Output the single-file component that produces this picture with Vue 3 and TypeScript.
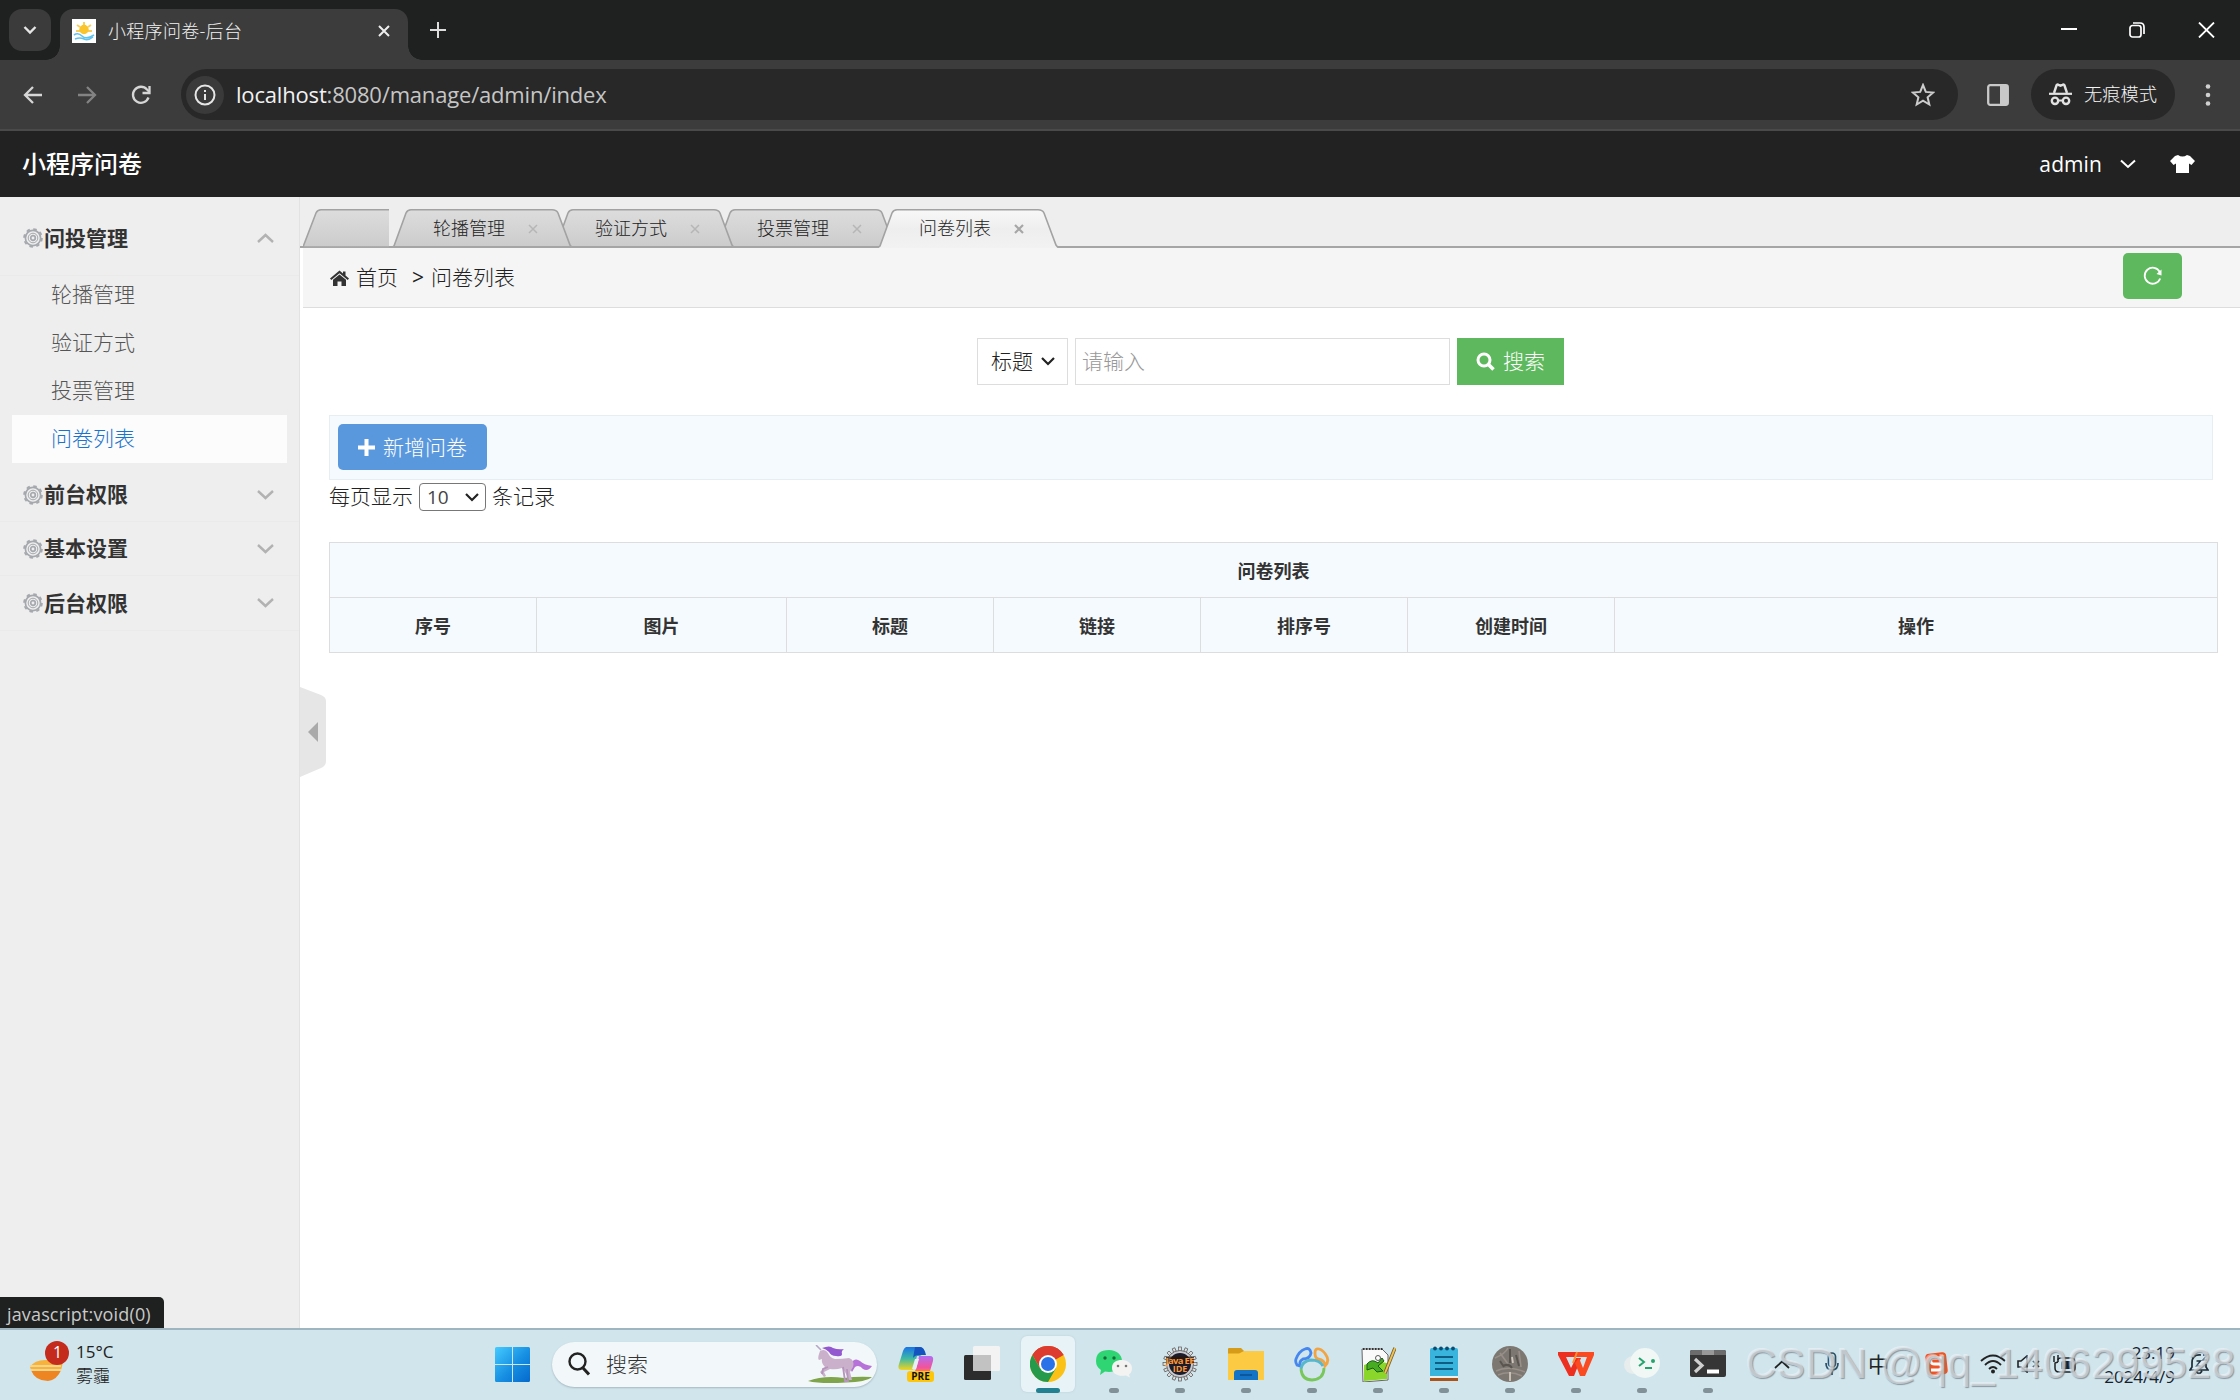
<script setup lang="ts">
interface Group { title: string; open: boolean; height: number; items: string[] }

const groups: Group[] = [
  { title: '问投管理', open: true, height: 75, items: ['轮播管理', '验证方式', '投票管理', '问卷列表'] },
  { title: '前台权限', open: false, height: 54, items: [] },
  { title: '基本设置', open: false, height: 54, items: [] },
  { title: '后台权限', open: false, height: 55, items: [] },
]
const activeItem = '问卷列表'
const tabs: string[] = ['轮播管理', '验证方式', '投票管理', '问卷列表']
const columns: { name: string; width: number }[] = [
  { name: '序号', width: 207 },
  { name: '图片', width: 250 },
  { name: '标题', width: 207 },
  { name: '链接', width: 207 },
  { name: '排序号', width: 207 },
  { name: '创建时间', width: 207 },
  { name: '操作', width: 603 },
]
const gearTeeth: number[] = Array.from({ length: 16 }, (_, i) => i * 22.5)
</script>

<template>
  <div class="screen">
    <div class="tabstrip">
      <div class="tab-search">
        <svg width="14" height="10" viewBox="0 0 14 10"><path d="M1.5 2 7 7.5 12.5 2" fill="none" stroke="#e6e6e6" stroke-width="2.4" /></svg>
      </div>
      <div class="browser-tab">
        <svg class="favicon" width="24" height="24" viewBox="0 0 24 24">
          <rect width="24" height="24" fill="#fff" />
          <path d="M12 3v3M5 6l3 2M19 6l-3 2M4 12h4M16 12h4" stroke="#f9cf5c" stroke-width="2" />
          <circle cx="12" cy="10.500" r="4.700" fill="#f9c42c" />
          <path d="M2 16q4-3 8 1t12-1M3 20q5-2 9 0t9-2" fill="none" stroke="#5fc3ee" stroke-width="1.600" />
        </svg>
        <span class="browser-title">小程序问卷-后台</span>
        <svg width="12" height="12" viewBox="0 0 12 12"><path d="M1 1 11 11M11 1 1 11" stroke="#eee" stroke-width="2" /></svg>
      </div>
      <svg class="new-tab" width="16" height="16" viewBox="0 0 16 16"><path d="M8 0v16M0 8h16" stroke="#ddd" stroke-width="2" /></svg>
      <svg class="win min" width="16" height="16" viewBox="0 0 16 16"><path d="M0 7h16" stroke="#fff" stroke-width="2" /></svg>
      <svg class="win max" width="16" height="16" viewBox="0 0 16 16"><rect x="1" y="3.500" width="11" height="11.500" rx="2.500" fill="none" stroke="#fff" stroke-width="1.700" /><path d="M4 1h7q4 0 4 4v7" fill="none" stroke="#fff" stroke-width="1.700" /></svg>
      <svg class="win close" width="17" height="16" viewBox="0 0 17 16"><path d="M1 .5 16 15.500M16 .5 1 15.500" stroke="#fff" stroke-width="1.800" /></svg>
    </div>

    <div class="toolbar">
      <svg class="nav-ic" width="20" height="20" viewBox="0 0 20 20"><path d="M19 10H2M10 2 2 10l8 8" fill="none" stroke="#d6d6d6" stroke-width="2.300" /></svg>
      <svg class="nav-ic" width="20" height="20" viewBox="0 0 20 20"><path d="M1 10h17M10 2l8 8-8 8" fill="none" stroke="#838383" stroke-width="2.300" /></svg>
      <svg class="nav-ic" width="20" height="20" viewBox="0 0 20 20"><path d="M17.500 12.500A8 8 0 1 1 16 4.500L18.500 7" fill="none" stroke="#d6d6d6" stroke-width="2.300" /><path d="M18.500 1v7h-7" fill="none" stroke="#d6d6d6" stroke-width="2.300" /></svg>
      <div class="omnibox">
        <span class="info">
          <svg width="22" height="22" viewBox="0 0 22 22"><circle cx="11" cy="11" r="9.500" fill="none" stroke="#e6e6e6" stroke-width="2" /><path d="M11 10v6M11 6v2" stroke="#e6e6e6" stroke-width="2" /></svg>
        </span>
        <span class="url"><b>localhost</b>:8080/manage/admin/index</span>
        <svg width="24" height="24" viewBox="0 0 24 24"><path d="m12 2 2.800 6.900 7.400.6-5.600 4.800 1.700 7.200-6.300-3.900-6.300 3.900 1.700-7.200L1.800 9.500l7.400-.6z" fill="none" stroke="#ccc" stroke-width="2" /></svg>
      </div>
      <svg class="panel-ic" width="22" height="22" viewBox="0 0 22 22"><rect x="1.200" y="1.200" width="19.600" height="19.600" rx="2" fill="none" stroke="#c9c9c9" stroke-width="2.300" /><path d="M13 1h7a1 1 0 0 1 1 1v18a1 1 0 0 1-1 1h-7z" fill="#c9c9c9" /></svg>
      <div class="incognito">
        <svg width="23" height="23" viewBox="0 0 23 23">
          <path d="M5 10 7.500 2.500Q8 1 9.500 1.800L11.500 2.700 13.500 1.800Q15 1 15.500 2.500L18 10" fill="none" stroke="#e2e2e2" stroke-width="2.400" />
          <path d="M0 10.800h23" stroke="#e2e2e2" stroke-width="2.200" />
          <circle cx="6" cy="17.800" r="3.200" fill="none" stroke="#e2e2e2" stroke-width="2.400" /><circle cx="17" cy="17.800" r="3.200" fill="none" stroke="#e2e2e2" stroke-width="2.400" />
          <path d="M9 17.500h5" stroke="#e2e2e2" stroke-width="2" />
        </svg>
        <span>无痕模式</span>
      </div>
      <svg class="dots" width="6" height="22" viewBox="0 0 6 22"><g fill="#cfcfcf"><circle cx="3" cy="2.500" r="2.300" /><circle cx="3" cy="11" r="2.300" /><circle cx="3" cy="19.500" r="2.300" /></g></svg>
    </div>

    <header class="site-head">
      <span class="brand">小程序问卷</span>
      <span class="user">admin</span>
      <svg class="user-arrow" width="16" height="10" viewBox="0 0 16 10"><path d="M1 1.500 8 8l7-6.500" fill="none" stroke="#fff" stroke-width="2" /></svg>
      <svg width="25" height="18" viewBox="0 0 25 18"><path d="M8 0q4.500 3 9 0l3 1 5 5-3.500 4-2.500-1.500V18H6V8.500L3.500 10 0 6l5-5z" fill="#fff" /></svg>
    </header>

    <div class="body">
      <aside class="sidebar">
        <div v-for="g in groups" :key="g.title" class="group">
          <div class="group-head" :style="{ height: g.height + 'px' }">
            <svg width="20" height="20" viewBox="0 0 20 20">
              <g fill="none" stroke="#a5a8ad"><circle cx="10" cy="10" r="7.600" stroke-width="1.700" /><circle cx="10" cy="10" r="8.900" stroke-width="1.800" stroke-dasharray="3.500 3.490" /><circle cx="10" cy="10" r="4.800" stroke-width="1" /><circle cx="10" cy="10" r="2.300" stroke-width="1.700" /></g>
            </svg>
            <b>{{ g.title }}</b>
            <svg width="17" height="10" viewBox="0 0 17 10"><path :d="g.open ? 'M1 9 8.500 2 16 9' : 'M1 1 8.500 8 16 1'" fill="none" stroke="#b2b2b2" stroke-width="2.400" /></svg>
          </div>
          <ul v-if="g.open">
            <li v-for="item in g.items" :key="item" :class="{ on: item === activeItem }">{{ item }}</li>
          </ul>
        </div>
      </aside>

      <main class="content">
        <div class="tabs">
          <svg class="tab-first" width="86" height="39" viewBox="0 0 86 39">
            <defs><linearGradient id="tabGrey" x1="0" y1="0" x2="0" y2="1"><stop offset="0" stop-color="#dddddd" /><stop offset="1" stop-color="#cbcbcc" /></linearGradient>
              <linearGradient id="tabLight" x1="0" y1="0" x2="0" y2="1"><stop offset="0" stop-color="#f8f8f8" /><stop offset=".5" stop-color="#eeeeef" /><stop offset="1" stop-color="#f2f2f3" /></linearGradient></defs>
            <path d="M0 38.500 13 4Q14.500 .8 18 .8H86V38.500z" fill="url(#tabGrey)" /><path d="M86 38H0L13 4Q14.500 .8 18 .8H86" fill="none" stroke="#a2a2a2" stroke-width="1.600" />
          </svg>
          <div v-for="(t, i) in tabs" :key="t" class="tab" :style="{ zIndex: i === 3 ? 9 : 5 - i }">
            <svg class="tab-bg" width="180" height="39" viewBox="0 0 180 39">
              <path d="M0 39 2 37 14 4Q15.500 .8 19 .8H160Q164.500 .8 166 4L178 36 180 39z" :fill="i === 3 ? 'url(#tabLight)' : 'url(#tabGrey)'" />
              <path d="M0 38.500 2 37 14 4Q15.500 .8 19 .8H160Q164.500 .8 166 4L178 36 180 38.500" fill="none" stroke="#a2a2a2" stroke-width="1.600" />
              <path v-if="i !== 3" d="M0 38H180" stroke="#a5a5a5" stroke-width="2" />
            </svg>
            <span>{{ t }}</span>
            <svg class="tab-x" width="10" height="10" viewBox="0 0 10 10"><path d="M1 1 9 9M9 1 1 9" :stroke="i === 3 ? '#a6a6a6' : '#b6b6b6'" :stroke-width="i === 3 ? 2.2 : 1.5" /></svg>
          </div>
        </div>

        <div class="crumbs">
          <svg width="19" height="16" viewBox="0 0 19 16"><path d="M0 8.500 9.500 .5 13 3.400V1.500h2.500v4L19 8.500 17.700 10 9.500 3.200 1.300 10z" fill="#333" /><path d="M3 9.800 9.500 4.500 16 9.800V16h-4.500v-4.500h-4V16H3z" fill="#333" /></svg>
          <span class="c1">首页</span><span class="c2">&gt;</span><span>问卷列表</span>
          <div class="refresh">
            <svg width="20" height="20" viewBox="0 0 20 20"><path d="M17.200 12.500A8 8 0 1 1 16.800 6" fill="none" stroke="#fff" stroke-width="1.800" /><path d="M18.500 3.500v6l-5-1.500z" fill="#fff" /></svg>
          </div>
        </div>

        <div class="panel">
          <div class="search">
            <div class="field">标题<svg width="14" height="9" viewBox="0 0 14 9"><path d="M1 1 7 7l6-6" fill="none" stroke="#222" stroke-width="2.200" /></svg></div>
            <div class="keyword">请输入</div>
            <div class="go"><svg width="19" height="19" viewBox="0 0 19 19"><circle cx="8" cy="8" r="6" fill="none" stroke="#fff" stroke-width="3" /><path d="m12 12 5.500 5.500" stroke="#fff" stroke-width="3.500" /></svg>搜索</div>
          </div>
          <div class="actions">
            <div class="add"><svg width="17" height="17" viewBox="0 0 17 17"><path d="M8.500 0v17M0 8.500h17" stroke="#fff" stroke-width="4" /></svg>新增问卷</div>
          </div>
          <div class="pager">
            <span>每页显示</span><span class="size">10<svg width="14" height="9" viewBox="0 0 14 9"><path d="M1 1 7 7l6-6" fill="none" stroke="#222" stroke-width="2.200" /></svg></span><span>条记录</span>
          </div>
          <table>
            <colgroup><col v-for="c in columns" :key="c.name" :style="{ width: c.width + 'px' }"></colgroup>
            <thead>
              <tr><th :colspan="columns.length">问卷列表</th></tr>
              <tr><th v-for="c in columns" :key="c.name">{{ c.name }}</th></tr>
            </thead>
          </table>
        </div>
        <svg class="handle" width="27" height="90" viewBox="0 0 27 90"><path d="M0 0 21 8Q26 10 26 14V74Q26 79 21 81L0 90z" fill="#e6e6e6" /><path d="M18 35v20L8 45z" fill="#aaa" /></svg>
      </main>
      <div class="status">javascript:void(0)</div>
    </div>

    <footer class="taskbar">
      <div class="weather">
        <svg width="48" height="46" viewBox="0 0 48 46">
          <path d="M4 27q5-8 18-7t15-2q0 11-5 17-7 7-17 4-9-3-11-12z" fill="#f7b23b" />
          <path d="M5 30h30q-4 10-13 11Q9 41 5 30z" fill="#ee8523" /><path d="M4 26h31M5 30h30" stroke="#f9d48b" stroke-width="2" />
          <circle cx="31" cy="13" r="12" fill="#c42b1c" />
        </svg>
        <span class="badge">1</span>
        <div class="degrees"><span>15°C</span><span>雾霾</span></div>
      </div>
      <svg class="start" width="35" height="35" viewBox="0 0 35 35">
        <defs><linearGradient id="winBlue" x1="0" y1="0" x2="1" y2="1"><stop offset="0" stop-color="#45cbff" /><stop offset=".55" stop-color="#168ee2" /><stop offset="1" stop-color="#0569cd" /></linearGradient></defs>
        <path d="M1.500 0H17v17H0V1.500Q0 0 1.500 0zM18 0h15.500Q35 0 35 1.500V17H18zM0 18h17v17H1.500Q0 35 0 33.500zM18 18h17v15.500q0 1.500-1.500 1.500H18z" fill="url(#winBlue)" />
      </svg>
      <div class="win-search">
        <svg width="22" height="24" viewBox="0 0 22 24"><circle cx="9.500" cy="9.500" r="8" fill="none" stroke="#222" stroke-width="2.400" /><path d="m15 16 6 6.500" stroke="#222" stroke-width="3" /></svg>
        <span>搜索</span>
        <svg width="64" height="38" viewBox="0 0 64 38">
          <path d="M0 36q16-6 36-3 14-2 28-1-6 5-26 5.500Q12 39 0 36z" fill="#7fa44b" />
          <path d="M43 18q4-6 9-2 4 4 12 5-4 6-9 3-4-5-8-2l-3 5q-3-5-1-9z" fill="#b672d8" />
          <path d="M12 6q5-3 8 2 2 5 7 6 8 0 14-1 6 2 4 9l-3 5 2 8h-3l-4-8-3-4q-6 2-12 1l-6 3 2 4-2 1-4-5 5-5q-4-4-3-8l-3 1q-2-1 1-9z" fill="#cbb0cc" />
          <path d="M20 22l-5 2-1 5M35 22l2 14h3l-1-12" fill="none" stroke="#b695bd" stroke-width="1.800" />
          <path d="M14 3q8-3 11 0 5 2 11 1-3 2-2 5 0 3-6 2-5 0-7-4-3-3-7-4z" fill="#9357cf" />
          <path d="M13 5 8 0" stroke="#b7a4c6" stroke-width="1.500" />
        </svg>
      </div>
      <div class="apps">
        <div class="app">
          <svg width="36" height="36" viewBox="0 0 36 36">
            <defs><linearGradient id="copA" x1="0" y1="0" x2="0" y2="1"><stop offset="0" stop-color="#1b73e8" /><stop offset=".5" stop-color="#3db9a5" /><stop offset="1" stop-color="#f2d51f" /></linearGradient><linearGradient id="copB" x1="0" y1="0" x2="0" y2="1"><stop offset="0" stop-color="#b16df3" /><stop offset=".6" stop-color="#f2539b" /><stop offset="1" stop-color="#ff9356" /></linearGradient></defs>
            <path d="M8 1H22q4 0 5 6l-5 3-3 0-4 14H4Q-1 24 1 18L5 5q1-3 3-4z" fill="url(#copA)" />
            <path d="M21 10h11q4 0 3 5l-3 10q-1 4-5 4H14l3-4q2-3 4-15z" fill="url(#copB)" />
            <path d="M17 1h5q4 0 6 8h-7q-4 0-6 3z" fill="#1554c0" />
            <path d="m17 13-3 10h4l3-10z" fill="#e4f0f4" />
            <rect x="9" y="25" width="27" height="11" rx="3" fill="#fdc60b" />
            <text x="22.500" y="34" text-anchor="middle" font-size="10" font-weight="700" fill="#111">PRE</text>
          </svg>
        </div>
        <div class="app"><svg width="36" height="36" viewBox="0 0 36 36"><rect y="9" width="27" height="25" rx="1.500" fill="#2c2c2c" /><rect x="9" width="27" height="25" rx="1.500" fill="#f3f3f3" /><path d="M9 9h18v16H10.500Q9 25 9 23.500z" fill="#c2c2c2" /></svg></div>
        <div class="app current"><svg width="36" height="36" viewBox="0 0 36 36">
          <circle cx="18" cy="18" r="18" fill="#fbc116" /><path d="M18 18 2.400 9A18 18 0 0 1 33.600 9z" fill="#dd3b2f" /><path d="M18 9h15.600A18 18 0 0 0 2.400 9l7.800 13.500z" fill="#dd3b2f" /><path d="M2.400 9A18 18 0 0 0 18 36l7.800-13.500L18 18l-7.800 4.500z" fill="#249a4a" /><circle cx="18" cy="18" r="9" fill="#fff" /><circle cx="18" cy="18" r="7" fill="#2a72e8" /></svg></div>
        <div class="app run"><svg width="36" height="36" viewBox="0 0 36 36"><path d="M13 4c8 0 13 5 13 11S20 26 13 26l-4-.5L4 29l1-5Q0 21 0 15 0 4 13 4z" fill="#2fd572" /><circle cx="9" cy="12" r="1.700" fill="#166d39" /><circle cx="18" cy="12" r="1.700" fill="#166d39" /><path d="M26 14c6 0 10 4 10 8s-2 6-3 6.500l1 3-4-2c-8 1.500-14-2-14-7.500s4-8 10-8z" fill="#f3f3f1" /><circle cx="22" cy="20" r="1.300" fill="#777" /><circle cx="30" cy="20" r="1.300" fill="#777" /></svg></div>
        <div class="app run"><svg width="36" height="36" viewBox="0 0 36 36">
          <rect v-for="a in gearTeeth" :key="a" x="16.600" y="1" width="2.800" height="6" fill="#dcdcdc" stroke="#555" stroke-width=".7" :transform="`rotate(${a} 18 18)`" />
          <circle cx="18" cy="18" r="13.500" fill="#c9cbd0" stroke="#555" stroke-width=".8" /><circle cx="18" cy="18" r="11" fill="#1c1c2a" />
          <path d="M4 10.500h28v7H4z" fill="#2a1608" opacity=".7" />
          <text x="18" y="17.500" text-anchor="middle" font-size="9.500" font-weight="700" fill="#f7983e" textLength="29">Java EE</text><text x="18" y="26" text-anchor="middle" font-size="9" font-weight="700" fill="#f7983e">IDE</text></svg></div>
        <div class="app run"><svg width="36" height="36" viewBox="0 0 36 36"><path d="M0 3q0-1 1-1h12l3 3v4H0z" fill="#d79b1a" /><path d="M0 7.500h11L16 5h20v29H0z" fill="#fccb43" /><path d="M6 34V27q0-3 3-3h18q3 0 3 3v7z" fill="#1573c6" /><path d="M12 29h12" stroke="#0a4d90" stroke-width="1.500" /></svg></div>
        <div class="app run"><svg width="36" height="36" viewBox="0 0 36 36"><g fill="none" stroke-width="2.800"><path d="M17 7Q16 1 11 3 5 5 2 13q-1 3 1 6l3 1q-1-5 3-7 7 0 8-6z" stroke="#4587ee" /><path d="M25 3q-4-1-4 4 0 5 3 6 7 1 7 7 5-5 1-11-3-5-7-6z" stroke="#f2a442" /><path d="M7 23q1 11 11 11 12-1 12-12" stroke="#79c75b" /><path d="M7 23q1-8 10-9 9 0 12 6" stroke="#58b7cb" /></g></svg></div>
        <div class="app run"><svg width="36" height="36" viewBox="0 0 36 36"><path d="M2 3h20l6 6v25L3 36z" fill="#fafafa" stroke="#666" stroke-width="1" /><path d="M4 19q12-5 23-2v16L4 35z" fill="#8ad62a" /><path d="M7 18q5-6 11-1l4-5 2 3-6 5 5 5-6 1-4-4-6 2z" fill="#48ac22" stroke="#185a18" stroke-width="1" /><circle cx="18" cy="12" r="2.500" fill="#fff" stroke="#333" stroke-width=".8" /><path d="M35 2 25 27" stroke="#6d5630" stroke-width="3.400" /><path d="M35 2 25 27" stroke="#f0c350" stroke-width="2" /><path d="M3 3h20" stroke="#333" stroke-width="2" stroke-dasharray="1.500 1.500" /></svg></div>
        <div class="app run"><svg width="36" height="36" viewBox="0 0 36 36"><rect x="4" y="2" width="28" height="31" rx="2" fill="#38b4dd" /><path d="M4 31h28v4H4z" fill="#a9541c" /><path d="M4 30h28v2H4z" fill="#f2eee8" /><path d="M9 11h18M9 17h18M9 23h18" stroke="#0f5c84" stroke-width="2" /><g fill="#0c4c70"><circle cx="9" cy="2.500" r="1.900" /><circle cx="15" cy="2.500" r="1.900" /><circle cx="21" cy="2.500" r="1.900" /><circle cx="27" cy="2.500" r="1.900" /></g></svg></div>
        <div class="app run"><svg width="36" height="36" viewBox="0 0 36 36"><circle cx="18" cy="18" r="18" fill="#7d7772" /><path d="M3 12Q13 8 16 2M4 25q12-6 29 1M6 29q12-5 24 1M8 7l8 11M27 5l2 16" stroke="#978f88" stroke-width="1.600" fill="none" /><path d="M18 3v14M24 9l3 11M11 20q6-3 9 2M8 15l4 6" stroke="#5b5550" stroke-width="2" fill="none" /><path d="M20 11l1 6M18 26v9" stroke="#d0c8bf" stroke-width="1.800" /></svg></div>
        <div class="app run"><svg width="36" height="36" viewBox="0 0 36 36"><path d="M0 6h28l-3 5H8l5 11 5-10h5l-7 18h-5L0 9z" fill="#ec2f1e" /><path d="M20 6h16v3l-9 21h-5L17 17l4-5 4 10 4-11H17z" fill="#fa4a21" /><path d="m19 6-4 11" fill="none" stroke="#ff8d32" stroke-width="2" /></svg></div>
        <div class="app run"><svg width="36" height="36" viewBox="0 0 36 36"><circle cx="9" cy="19" r="9" fill="#e7ecec" /><circle cx="21" cy="17" r="15" fill="#f0f7f5" /><path d="m15 12 5 4-5 4M21 22h7" fill="none" stroke="#24a46d" stroke-width="2" /><circle cx="29" cy="15" r="2" fill="#24a46d" /></svg></div>
        <div class="app run"><svg width="36" height="36" viewBox="0 0 36 36"><rect y="4" width="36" height="27" rx="2" fill="#363636" /><path d="M0 9V6q0-2 2-2h32q2 0 2 2v3z" fill="#6c6c6c" /><path d="M12 4h12v5H12z" fill="#999" /><path d="m5 13 7 6.500L5 26" fill="none" stroke="#cfcfcf" stroke-width="3.200" /><path d="M17 25.500h12" stroke="#fff" stroke-width="4" /></svg></div>
      </div>
      <div class="tray">
        <svg width="16" height="9" viewBox="0 0 16 9"><path d="M1 8 8 1.500 15 8" fill="none" stroke="#222" stroke-width="1.800" /></svg>
        <svg class="t-mic" width="14" height="24" viewBox="0 0 14 24"><rect x="3.500" y="1" width="7" height="14" rx="3.500" fill="none" stroke="#2a5064" stroke-width="1.700" /><path d="M1 11q0 7 6 7t6-7M7 18v5" fill="none" stroke="#2a5064" stroke-width="1.700" /></svg>
        <span class="ime">中</span>
        <svg class="t-sg" width="23" height="24" viewBox="0 0 23 24"><rect x="1" y="1" width="21" height="22" rx="4" fill="#ee5424" transform="rotate(-6 11 12)" /><path d="M17 6H9q-4 0-3 4 0 2 4 2h4q3 0 3 3t-4 3H6" fill="none" stroke="#fff" stroke-width="2.800" /></svg>
        <svg class="t-wifi" width="26" height="20" viewBox="0 0 26 20"><path d="M1 7q12-11 24 0M5 11q8-8 16 0M9 15q4-4 8 0" fill="none" stroke="#222" stroke-width="1.900" /><circle cx="13" cy="17.500" r="2" fill="#222" /></svg>
        <svg class="t-vol" width="23" height="18" viewBox="0 0 23 18"><path d="M1 6h3l6-5v16l-6-5H1zM16 6l6 6M22 6l-6 6" fill="none" stroke="#222" stroke-width="1.600" /></svg>
        <svg class="t-bat" width="23" height="18" viewBox="0 0 23 18"><path d="M5 5Q5 3 8 3h10q4 0 4 4v6q0 4-4 4H6q-4 0-4-4V8l3-1" fill="none" stroke="#222" stroke-width="1.500" /><path d="M8 14V8q0-2 2-2h7q2 0 2 2v6z" fill="#15202b" /><path d="M1 1v6M5 0v7" stroke="#222" stroke-width="1.500" /></svg>
        <div class="clock"><span>23:19</span><span>2024/4/9</span></div>
        <svg width="20" height="22" viewBox="0 0 20 22"><path d="M12 2Q3 1 3 10v4l-2 3h18l-2-3v-3M7 18q3 5 6 0" fill="none" stroke="#1e2b35" stroke-width="1.700" /><path d="M7.500 8h4l-4 5h4M14 2h4l-4 5h4" fill="none" stroke="#1e2b35" stroke-width="1.400" /></svg>
      </div>
      <span class="watermark">CSDN @qq_1406299528</span>
    </footer>
  </div>
</template>

<style>
body { margin: 0; background: #fff; overflow: hidden; }
</style>

<style scoped>
* { box-sizing: border-box; }
svg { display: block; flex: none; }
.screen { width: 2240px; height: 1400px; display: flex; flex-direction: column; overflow: hidden; font-family: "Open Sans", "Noto Sans CJK SC", sans-serif; color: #333; font-size: 21px; line-height: 1; white-space: nowrap; }
.tabstrip { height: 60px; flex: none; display: flex; align-items: center; background: #1f2020; padding-left: 9px; }
.tab-search { width: 42px; height: 42px; border-radius: 13px; background: #3b3b3b; display: flex; align-items: center; justify-content: center; }
.browser-tab { align-self: flex-end; margin-left: 9px; width: 348px; height: 51px; border-radius: 13px 13px 0 0; background: #3c3c3c; display: flex; align-items: center; padding: 0 18px 8px 12px; position: relative; }
.browser-tab::before, .browser-tab::after { content: ""; position: absolute; bottom: 0; width: 14px; height: 14px; }
.browser-tab::before { left: -14px; background: radial-gradient(circle at 0 0, transparent 13.5px, #3c3c3c 14px); }
.browser-tab::after { right: -14px; background: radial-gradient(circle at 100% 0, transparent 13.5px, #3c3c3c 14px); }
.browser-title { margin-left: 12px; flex: 1; font-size: 18px; letter-spacing: .3px; color: #f2f2f2; font-weight: 300; }
.new-tab { margin-left: 22px; }
.min { margin-left: auto; }
.max { margin-left: 52px; }
.close { margin: 0 25px 0 53px; }
.toolbar { height: 71px; flex: none; display: flex; align-items: center; background: #3c3c3c; border-bottom: 2px solid #4a4a4a; padding: 0 0 0 23px; }
.nav-ic { margin-right: 34px; }
.omnibox { margin-left: -4px; width: 1777px; height: 51px; border-radius: 26px; background: #282828; display: flex; align-items: center; padding: 0 23px 0 5px; }
.info { width: 38px; height: 38px; border-radius: 50%; background: #3a3a3a; display: flex; align-items: center; justify-content: center; }
.url { flex: 1; margin: -2px 0 0 12px; font-size: 22px; letter-spacing: -.18px; color: #c6c6c6; }
.url b { font-weight: 400; color: #f2f2f2; }
.panel-ic { margin-left: 29px; }
.incognito { margin-left: 22px; width: 144px; height: 51px; border-radius: 26px; background: #282828; display: flex; align-items: center; padding-left: 18px; font-size: 18.3px; font-weight: 300; color: #f4f4f4; }
.incognito span { margin-left: 12px; }
.dots { margin-left: 30px; }
.site-head { height: 66px; flex: none; background: #222; display: flex; align-items: center; padding: 0 45px 0 22px; color: #fff; }
.brand { font-size: 24px; font-weight: 500; flex: 1; }
.user { font-size: 21px; font-weight: 500; letter-spacing: .1px; }
.user-arrow { margin: 0 34px 0 18px; }
.body { height: 1131px; flex: none; display: flex; position: relative; }
.sidebar { width: 300px; background: #eee; border-right: 1px solid #e2e2e2; padding-top: 4px; }
.group-head { display: flex; align-items: center; padding: 0 25px 0 23px; border-bottom: 1px solid #eaeaea; }
.group-head b { flex: 1; margin-left: 1px; font-size: 21px; font-weight: 700; color: #333; }
.sidebar ul { list-style: none; margin: 0; padding: 0 12px; margin-top: -5px; margin-bottom: 5px; }
.sidebar li { height: 48px; display: flex; align-items: center; padding: 0 0 1px 39px; font-size: 21px; color: #555; font-weight: 300; }
.sidebar li.on { background: #fcfcfc; color: #1a73cd; }
.content { width: 1940px; position: relative; display: flex; flex-direction: column; }
.tabs { height: 51px; background: #eeeeef; border-bottom: 2px solid #a5a5a5; display: flex; align-items: flex-end; padding-left: 3px; flex: none; }
.tab-first { margin: 0 3px -2px 0; }
.tab { width: 180px; height: 39px; margin: 0 -18px -2px 0; position: relative; display: flex; align-items: center; padding: 0 0 1px 41px; font-size: 18px; font-weight: 300; color: #222; }
.tab-bg { position: absolute; left: 0; top: 0; }
.tab span, .tab-x { position: relative; }
.tab-x { margin: 2px 0 0 23px; }
.crumbs { margin-left: 3px; height: 60px; flex: none; background: #f5f5f5; border-bottom: 1px solid #ddd; display: flex; align-items: center; padding: 0 58px 0 27px; font-size: 21px; font-weight: 300; color: #222; }
.c1 { margin: 0 14px 0 7px; }
.c2 { margin-right: 7px; font-weight: 400; }
.refresh { margin: -3px 0 0 auto; width: 59px; height: 46px; border-radius: 5px; background: #5eb95e; display: flex; align-items: center; justify-content: center; }
.panel { padding: 30px 22px 0 29px; font-weight: 300; color: #222; }
.search { height: 47px; display: flex; margin-left: 648px; }
.field { width: 91px; height: 47px; border: 1px solid #ddd; display: flex; align-items: center; justify-content: space-between; padding: 0 12px 0 13px; color: #222; }
.keyword { width: 375px; border: 1px solid #ddd; margin: 0 7px 0 7px; display: flex; align-items: center; padding-left: 6px; color: #999; }
.go { width: 107px; background: #5eb95e; color: #fff; display: flex; align-items: center; justify-content: center; gap: 8px; }
.actions { margin-top: 30px; height: 65px; width: 1884px; background: #f5fafe; border: 1px solid #e6eef4; padding: 8px; }
.add { width: 149px; height: 46px; border-radius: 5px; background: #5a98de; color: #fff; display: flex; align-items: center; justify-content: center; gap: 8px; }
.pager { height: 28px; margin-top: 3px; display: flex; align-items: center; }
.pager > span:not(.size) { margin-top: -1px; }
.size { width: 67px; height: 28px; margin: 0 6px 0 6px; border: 1.5px solid #777; border-radius: 4px; display: flex; align-items: center; justify-content: space-between; padding: 0 6px 0 7px; font-size: 19px; font-weight: 400; color: #444; }
table { margin-top: 31px; width: 1888px; table-layout: fixed; border-collapse: collapse; background: #f5fafe; font-size: 18px; }
th { height: 55px; padding: 1px 0 0; border: 1px solid #ddd; text-align: center; font-weight: 700; color: #333; }
.handle { position: absolute; left: 0; top: 490px; }
.status { position: absolute; left: 0; bottom: 0; width: 164px; height: 31px; background: #1f2020; color: #c9c9c9; border-top-right-radius: 5px; font-size: 18px; letter-spacing: .15px; padding: 8px 0 0 7px; }
.taskbar { flex: none; height: 72px; border-top: 2px solid #9fb5bf; background: #d1e5ed; display: flex; align-items: center; position: relative; padding-bottom: 2px; }
.weather { width: 495px; display: flex; align-items: center; padding: 0 0 2px 26px; position: relative; }
.badge { position: absolute; left: 53px; top: 4px; font-size: 16px; color: #fff; }
.degrees { margin-left: 2px; font-size: 17px; display: flex; flex-direction: column; gap: 7px; color: #222; }
.degrees span + span { font-weight: 300; }
.start { margin-right: 22px; }
.win-search { width: 325px; height: 45px; border-radius: 23px; background: #f2f8f9; box-shadow: 0 1px 2px #a6b8c0; display: flex; align-items: center; padding: 0 5px 0 16px; font-size: 21px; font-weight: 300; }
.win-search span { margin-left: 16px; flex: 1; }
.apps { display: flex; margin-left: 6px; }
.app { width: 66px; height: 68px; display: flex; align-items: center; justify-content: center; position: relative; }
.run::after, .current::after { content: ""; position: absolute; bottom: 5px; width: 10px; height: 5px; border-radius: 3px; background: #829198; }
.current::after { width: 24px; background: #238091; }
.current::before { content: ""; position: absolute; left: 6px; top: 6px; width: 54px; height: 56px; border-radius: 6px; background: #e7f3f6; box-shadow: 0 0 2px #b5c8d0; }
.current svg { position: relative; }
.tray { flex: 1; display: flex; align-items: center; padding-left: 33px; }
.t-mic { margin-left: 35px; }
.ime { margin-left: 29px; font-size: 21px; color: #222; }
.t-sg { margin-left: 36px; }
.t-wifi { margin-left: 32px; }
.t-vol { margin-left: 11px; }
.t-bat { margin-left: 13px; }
.clock { width: 99px; margin-right: 14px; display: flex; flex-direction: column; align-items: flex-end; gap: 7px; font-size: 17px; color: #15202b; }
.watermark { position: absolute; left: 1746px; top: 10px; font-family: "Liberation Sans", sans-serif; font-size: 42px; letter-spacing: .68px; line-height: 48px; color: rgba(225, 230, 234, .6); text-shadow: 1px 1px 1px rgba(110, 120, 128, .7), -1px -1px 0 rgba(255, 255, 255, .4); }
</style>
